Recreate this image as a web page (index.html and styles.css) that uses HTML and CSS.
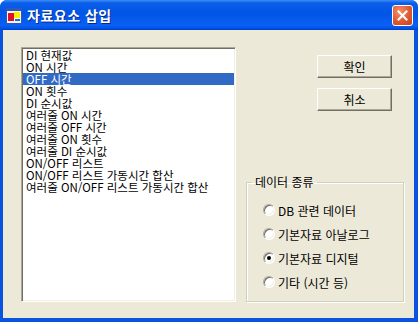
FILE: index.html
```html
<!DOCTYPE html>
<html lang="ko">
<head>
  <meta charset="UTF-8">
  <title>자료요소 삽입</title>
  <link rel="stylesheet" href="styles.css">
</head>
<body>
  <div class="window">
    <div class="titlebar">
      <svg class="app-icon" width="16" height="16" viewBox="0 0 16 16">
        <rect x="0.5" y="0.5" width="15" height="15" fill="#f4f4f4" stroke="#2d5ab8"/>
        <rect x="1" y="1" width="14" height="2" fill="#2d5ab8"/>
        <rect x="2" y="5" width="6" height="8" fill="#e0102a"/>
        <rect x="8" y="4" width="6" height="6" fill="#f8f000"/>
        <rect x="9" y="11" width="5" height="2" fill="#1c6ad8"/>
      </svg>
      <span class="title">자료요소 삽입</span>
      <button class="close" title="닫기">
        <svg width="11" height="11" viewBox="0 0 11 11">
          <path d="M1.5 1.5 L9.5 9.5 M9.5 1.5 L1.5 9.5" stroke="#fff" stroke-width="2" stroke-linecap="square"/>
        </svg>
      </button>
    </div>

    <div class="client">
      <ul class="listbox">
        <li>DI 현재값</li>
        <li>ON 시간</li>
        <li class="selected">OFF 시간</li>
        <li>ON 횟수</li>
        <li>DI 순시값</li>
        <li>여러줄 ON 시간</li>
        <li>여러줄 OFF 시간</li>
        <li>여러줄 ON 횟수</li>
        <li>여러줄 DI 순시값</li>
        <li>ON/OFF 리스트</li>
        <li>ON/OFF 리스트 가동시간 합산</li>
        <li>여러줄 ON/OFF 리스트 가동시간 합산</li>
      </ul>

      <div class="side">
        <div class="buttons">
          <button class="btn">확인</button>
          <button class="btn">취소</button>
        </div>

        <fieldset class="group">
          <legend>데이터 종류</legend>
          <label class="radio"><span class="dot"></span>DB 관련 데이터</label>
          <label class="radio"><span class="dot"></span>기본자료 아날로그</label>
          <label class="radio"><span class="dot checked"></span>기본자료 디지털</label>
          <label class="radio"><span class="dot"></span>기타 (시간 등)</label>
        </fieldset>
      </div>
    </div>
  </div>
</body>
</html>
```

FILE: styles.css
```css
body {
  margin: 0;
  font-family: "Noto Sans CJK KR", "DejaVu Sans", sans-serif;
  font-size: 12px;
  background: #fff;
}

.window {
  width: 418px;
  height: 322px;
  display: flex;
  flex-direction: column;
  background: #0a52e0;
  border-radius: 7px 7px 0 0;
  overflow: hidden;
}

/* title bar */
.titlebar {
  height: 30px;
  flex-shrink: 0;
  display: flex;
  align-items: center;
  padding: 0 5px 0 6px;
  background: linear-gradient(to bottom, #3c8cf8 0%, #0a5ee8 10%, #0055e6 45%, #0a60f4 85%, #0050e0 95%, #003cc8 100%);
}

.app-icon {
  flex-shrink: 0;
  margin-top: 1px;
}

.title {
  margin-left: 5px;
  color: #fff;
  font-weight: bold;
  font-size: 14px;
  letter-spacing: 0.5px;
  text-shadow: 1px 1px #0a2a88;
  flex: 1;
}

.close {
  width: 21px;
  height: 21px;
  padding: 0;
  display: flex;
  align-items: center;
  justify-content: center;
  border: 1px solid #fff;
  border-radius: 3px;
  background: radial-gradient(circle at 35% 30%, #f0926e 0%, #e0582f 55%, #c8401c 100%);
}

/* dialog body */
.client {
  flex: 1;
  display: flex;
  align-items: flex-start;
  margin: 0 4px 4px 3px;
  padding: 17px 0 0 18px;
  background: #ece9d8;
}

.listbox {
  width: 215px;
  height: 255px;
  box-sizing: border-box;
  margin: 0;
  padding: 1px 1px;
  list-style: none;
  background: #fff;
  border: 1px solid;
  border-color: #aca899 #fff #fff #aca899;
  box-shadow: inset 1px 1px #716f64, inset -1px -1px #f1efe2;
}

.listbox li {
  height: 12px;
  line-height: 12px;
  font-size: 11.5px;
  padding-left: 3px;
  white-space: nowrap;
  color: #000;
}

.listbox li.selected {
  background: #316ac5;
  color: #fff;
}

.side {
  width: 158px;
  height: 255px;
  margin-left: 10px;
  display: flex;
  flex-direction: column;
}

.buttons {
  display: flex;
  flex-direction: column;
  gap: 10px;
  margin: 8px 0 0 71px;
}

.btn {
  width: 75px;
  height: 23px;
  padding: 0;
  font: inherit;
  color: #000;
  background: #ece9d8;
  border: 1px solid;
  border-color: #fff #716f64 #716f64 #fff;
  box-shadow: inset -1px -1px #aca899;
}

.group {
  margin: auto 0 0 0;
  height: 126px;
  box-sizing: border-box;
  padding: 14px 0 0 0;
  border: 1px solid #d0d0bf;
  box-shadow: inset 1px 1px #fff, 1px 1px #fff;
  display: flex;
  flex-direction: column;
  gap: 8px;
}

.group legend {
  margin-left: 5px;
  padding: 0 3px;
  line-height: 12px;
}

.radio {
  display: flex;
  align-items: center;
  height: 16px;
  margin-left: 16px;
  white-space: nowrap;
}

.dot {
  width: 12px;
  height: 12px;
  box-sizing: border-box;
  margin-right: 3px;
  border-radius: 50%;
  background: #fff;
  border: 1px solid;
  border-color: #aca899 #fff #fff #aca899;
  box-shadow: inset 1px 1px #716f64, inset -1px -1px #f1efe2;
  display: flex;
  align-items: center;
  justify-content: center;
}

.dot.checked::after {
  content: "";
  width: 4px;
  height: 4px;
  border-radius: 50%;
  background: #000;
}
```
